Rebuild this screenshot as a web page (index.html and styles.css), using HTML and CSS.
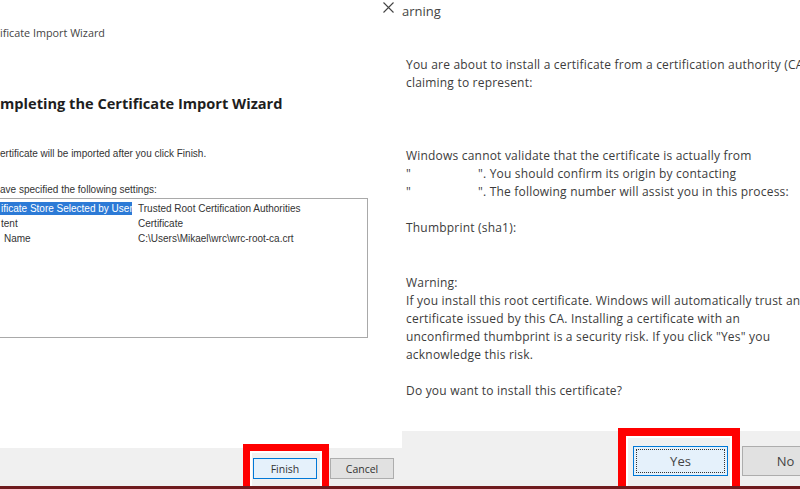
FILE: index.html
```html
<!DOCTYPE html>
<html lang="en">
<head>
  <meta charset="UTF-8">
  <title>Certificate Import Wizard - Security Warning</title>
  <link rel="stylesheet" href="styles.css">
</head>
<body>
  <div class="screen">
    <section class="wizard">
      <div class="wizard-top">
        <svg class="close" width="11" height="11" viewBox="0 0 11 11">
          <path d="M0.5 0.5 L10.5 10.5 M10.5 0.5 L0.5 10.5" stroke="#444" stroke-width="1.1" fill="none"/>
        </svg>
      </div>
      <div class="wizard-title">ificate Import Wizard</div>
      <h1>mpleting the Certificate Import Wizard</h1>
      <p class="note first">ertificate will be imported after you click Finish.</p>
      <p class="note second">ave specified the following settings:</p>

      <div class="listbox">
        <div class="row">
          <span class="key selected">ificate Store Selected by User</span>
          <span class="val">Trusted Root Certification Authorities</span>
        </div>
        <div class="row">
          <span class="key">tent</span>
          <span class="val">Certificate</span>
        </div>
        <div class="row">
          <span class="key indent">Name</span>
          <span class="val">C:\Users\Mikael\wrc\wrc-root-ca.crt</span>
        </div>
      </div>

      <div class="spacer"></div>
      <footer class="bar wizard-bar">
        <button class="btn primary">Finish<span class="mark"></span></button>
        <button class="btn">Cancel</button>
      </footer>
    </section>

    <section class="warning">
      <div class="warning-title">arning</div>
      <div class="message">
        <p class="m1">You are about to install a certificate from a certification authority (CA)<br>claiming to represent:</p>
        <p class="m2">Windows cannot validate that the certificate is actually from<br>
          <span class="quote">"</span>". You should confirm its origin by contacting<br>
          <span class="quote">"</span>". The following number will assist you in this process:</p>
        <p class="m3">Thumbprint (sha1):</p>
        <p class="m4">Warning:<br>If you install this root certificate. Windows will automatically trust any<br>certificate issued by this CA. Installing a certificate with an<br>unconfirmed thumbprint is a security risk. If you click "Yes" you<br>acknowledge this risk.</p>
        <p class="m5">Do you want to install this certificate?</p>
      </div>
      <div class="spacer"></div>
      <footer class="bar warning-bar">
        <button class="btn big primary focused">Yes<span class="mark thick"></span></button>
        <button class="btn big narrow">No</button>
      </footer>
    </section>
  </div>
</body>
</html>
```

FILE: styles.css
```css
html, body { margin: 0; padding: 0; background: #fff; }
body { width: 800px; height: 489px; overflow: hidden; }

.screen {
  display: flex;
  height: 486px;
  border-bottom: 3px solid #6f1b1e;
  overflow: hidden;
}

/* left: certificate import wizard */
.wizard {
  width: 402px;
  flex: none;
  display: flex;
  flex-direction: column;
  overflow: hidden;
  background: #fff;
  font-family: "Liberation Sans", Arial, sans-serif;
  color: #333;
}
.wizard-top {
  height: 16px;
  box-sizing: border-box;
  padding: 2px 8px 0 0;
  display: flex;
  justify-content: flex-end;
}
.close { display: block; }
.wizard-title {
  margin-top: 10px;
  font-family: "Open Sans", sans-serif;
  font-size: 10.8px;
  line-height: 14px;
  color: #444;
  white-space: nowrap;
}
h1 {
  margin: 53px 0 0;
  font-family: "Open Sans", sans-serif;
  font-weight: 700;
  font-size: 14.6px;
  line-height: 20px;
  color: #1e1e1e;
  white-space: nowrap;
}
.note {
  margin: 0;
  font-size: 10px;
  line-height: 12px;
  white-space: nowrap;
}
.note.first { margin-top: 35px; }
.note.second { margin-top: 24px; }

.listbox {
  margin: 2px 0 0 -2px;
  width: 370px;
  height: 140px;
  box-sizing: border-box;
  border: 1px solid #a9a9a9;
  padding-top: 2px;
  font-size: 10px;
}
.row {
  display: flex;
  align-items: center;
  height: 15px;
  white-space: nowrap;
}
.key {
  width: 133px;
  margin-right: 6px;
  padding-left: 2px;
  box-sizing: border-box;
  line-height: 13px;
  overflow: hidden;
}
.key.indent { padding-left: 5px; }
.key.selected { background: #2c7ad6; color: #fff; }
.val { color: #333; }

.spacer { flex: 1; }

.bar {
  display: flex;
  background: #f0f0f0;
}
.wizard-bar {
  height: 38px;
  box-sizing: border-box;
  padding: 10px 8px 0 0;
  justify-content: flex-end;
  gap: 13px;
}
.btn {
  position: relative;
  width: 64px;
  height: 21px;
  padding: 0;
  box-sizing: border-box;
  border: 1px solid #adadad;
  background: #e1e1e1;
  font-family: "Open Sans", sans-serif;
  font-size: 10.5px;
  color: #333;
}
.btn.primary {
  border-color: #0078d7;
  background: #e5f1fb;
}

/* red annotation boxes drawn over the buttons */
.mark {
  position: absolute;
  left: -11px;
  top: -15px;
  right: -13px;
  bottom: -20px;
  border: 7px solid #f00;
  box-shadow: inset 0 0 0 2px #fff;
}
.mark.thick {
  left: -16px;
  top: -19px;
  right: -13px;
  bottom: -25px;
  border-width: 8px;
}

/* right: security warning */
.warning {
  flex: 1;
  display: flex;
  flex-direction: column;
  overflow: hidden;
  background: #fff;
  font-family: "Open Sans", sans-serif;
  color: #3c3c3c;
}
.warning-title {
  margin-top: 3px;
  font-size: 13px;
  line-height: 16px;
  color: #444;
}
.message {
  padding-left: 4px;
  font-size: 12px;
  letter-spacing: 0.2px;
  line-height: 18px;
  white-space: nowrap;
}
.message p { margin: 0; }
.message .m1 { margin-top: 37px; }
.message .m2 { margin-top: 55px; }
.message .m3 { margin-top: 18px; }
.message .m4 { margin-top: 37px; }
.message .m5 { margin-top: 18px; }
.quote { display: inline-block; width: 72px; }

.warning-bar {
  height: 55px;
  box-sizing: border-box;
  padding: 15px 0 0 231px;
  gap: 14px;
}
.btn.big {
  flex: none;
  width: 95px;
  height: 30px;
  font-size: 13px;
  color: #444;
}
.btn.big.narrow { width: 87px; }
.btn.focused::before {
  content: "";
  position: absolute;
  inset: 2px;
  border: 1px dotted #333;
}
```
